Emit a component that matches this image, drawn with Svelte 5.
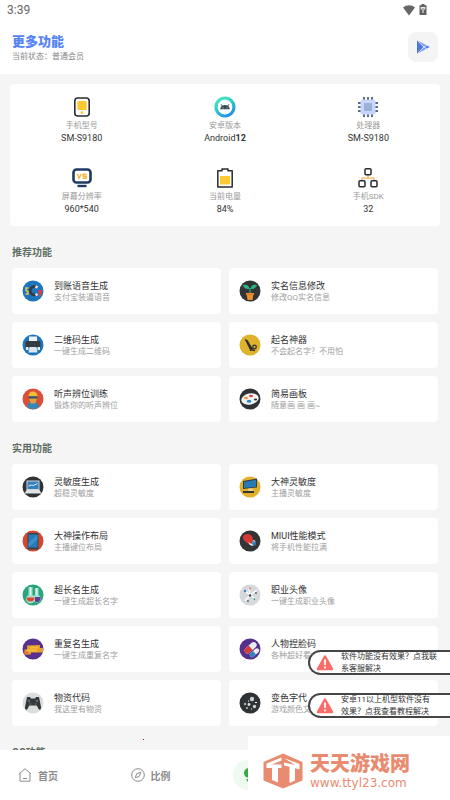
<script>
  const device = [
    { icon: "phone", label: "手机型号", value: "SM-S9180" },
    { icon: "android", label: "安卓版本", value: "Android", strong: "12" },
    { icon: "chip", label: "处理器", value: "SM-S9180" },
    { icon: "screen", label: "屏幕分辨率", value: "960*540" },
    { icon: "battery", label: "当前电量", value: "84%" },
    { icon: "sdk", label: "手机SDK", value: "32" },
  ];

  const sections = [
    {
      title: "推荐功能",
      items: [
        { icon: "magnet", name: "到账语音生成", desc: "支付宝装逼语音" },
        { icon: "plant", name: "实名信息修改", desc: "修改QQ实名信息" },
        { icon: "printer", name: "二维码生成", desc: "一键生成二维码" },
        { icon: "knife", name: "起名神器", desc: "不会起名字？不用怕" },
        { icon: "person", name: "听声辨位训练", desc: "锻炼你的听声辨位" },
        { icon: "palette", name: "简易画板", desc: "随意画 画 画~" },
      ],
    },
    {
      title: "实用功能",
      items: [
        { icon: "laptop", name: "灵敏度生成", desc: "超稳灵敏度" },
        { icon: "desktop", name: "大神灵敏度", desc: "主播灵敏度" },
        { icon: "tablet", name: "大神操作布局", desc: "主播键位布局" },
        { icon: "rocket", name: "MIUI性能模式", desc: "将手机性能拉满" },
        { icon: "flask", name: "超长名生成", desc: "一键生成超长名字" },
        { icon: "network", name: "职业头像", desc: "一键生成职业头像" },
        { icon: "ticket", name: "重复名生成", desc: "一键生成重复名字" },
        { icon: "pill", name: "人物捏脸码", desc: "各种超好看" },
        { icon: "gamepad", name: "物资代码", desc: "我这里有物资" },
        { icon: "space", name: "变色字代", desc: "游戏颜色文" },
      ],
    },
    { title: "QQ功能", items: [] },
  ];

  const notices = [
    "软件功能没有效果？点我联\n系客服解决",
    "安卓11以上机型软件没有\n效果？点我查看教程解决",
  ];

  // Badge background per tool icon
  const badge = {
    magnet: "#1d75bd",
    plant: "#323536",
    printer: "#1d75bd",
    knife: "#dfb22b",
    person: "#d94f38",
    palette: "#303335",
    laptop: "#303335",
    desktop: "#e2b02d",
    tablet: "#d5482f",
    rocket: "#323536",
    flask: "#27a57c",
    network: "#d5d9dc",
    ticket: "#57308e",
    pill: "#57308e",
    gamepad: "#dcdddd",
    space: "#303335",
  };
</script>

{#snippet deviceIcon(name)}
  <svg class="device-icon" viewBox="0 0 22 22" aria-hidden="true">
    {#if name === "phone"}
      <rect x="3.8" y="2" width="14.4" height="18" rx="3" fill="#fff" stroke="#292b30" stroke-width="1.6" />
      <rect x="6.3" y="5" width="9.4" height="9" rx="1" fill="#ffc931" />
      <circle cx="11" cy="16.7" r="1.4" fill="#ffc931" />
    {:else if name === "android"}
      <defs>
        <linearGradient id="ring" x1="0" y1="0" x2="0.6" y2="1">
          <stop offset="0" stop-color="#4cecbd" />
          <stop offset="0.5" stop-color="#2ecbc9" />
          <stop offset="1" stop-color="#2794e2" />
        </linearGradient>
      </defs>
      <circle cx="11" cy="11" r="9" fill="#fff" stroke="url(#ring)" stroke-width="3.2" />
      <path d="M6.2 13.3a4.8 4.3 0 0 1 9.6 0z" fill="#35495a" />
      <path d="M7 8.3l1.500 2M15 8.300l-1.500 2" stroke="#35495a" />
      <circle cx="9" cy="11.800" r=".5" fill="#fff" />
      <circle cx="13" cy="11.800" r=".5" fill="#fff" />
    {:else if name === "chip"}
      <path d="M7 1v20M11 1v20M15 1v20M1 7h20M1 11h20M1 15h20" stroke="#2d3a59" stroke-width="1.5" />
      <rect x="3.5" y="3.5" width="15" height="15" rx="2" fill="#c5d7ff" />
      <rect x="7" y="7" width="8" height="8" fill="#9eb0d5" />
    {:else if name === "screen"}
      <rect x="2.5" y="2.5" width="17" height="13" rx="3" fill="#fff" stroke="#203b63" stroke-width="2.6" />
      <path d="M6.3 7l1.8 4.2L10 7M15.5 7.3h-3.3v1.9h3v2h-3.4" fill="none" stroke="#f6b735" stroke-width="1.5" />
      <path d="M6.5 19h9" stroke="#203b63" stroke-width="2.4" />
    {:else if name === "battery"}
      <path d="M8 3.800V2h6v1.800h4.200V20H3.800V3.800z" fill="#fff" stroke="#292b30" stroke-width="1.5" stroke-linejoin="round" />
      <rect x="6" y="9" width="10" height="8.500" fill="#ffc931" />
    {:else}
      <path d="M5 14v-3h12v3M11 8v3" fill="none" stroke="#f3a638" stroke-width="1.2" />
      <g fill="#fff" stroke="#292b30" stroke-width="1.5">
        <rect x="8" y="1.800" width="6" height="6" rx="1" />
        <rect x="2" y="13.800" width="6" height="6" rx="1" />
        <rect x="14" y="13.800" width="6" height="6" rx="1" />
      </g>
    {/if}
  </svg>
{/snippet}

{#snippet toolIcon(name)}
  <svg class="tool-icon" viewBox="0 0 22 22" aria-hidden="true">
    <circle cx="11" cy="11" r="10.5" fill={badge[name]} />
    {#if name === "magnet"}
      <path d="M15 7.5a4.2 4.2 0 1 0 0 6.5" fill="none" stroke="#353a40" stroke-width="2.8" />
      <path d="M13.500 6.400l2 1.100M13.500 15.200l2-1.200" stroke="#e8eaec" stroke-width="2.6" />
      <path d="M6.500 8H4v2.500l2 1v2.500H3.500" fill="none" stroke="#e5cf48" stroke-width="1.4" />
      <path d="M16 10h4.500l-1 5-2 2z" fill="#d6424c" />
    {:else if name === "plant"}
      <path d="M11 13V8" stroke="#29a577" stroke-width="1.2" />
      <path d="M10.500 9C7 9.500 4.500 8 4 5c4-.6 6 .7 6.500 4zM11.500 9c3.500.2 5.700-1.500 6.500-4-4-.8-6 .6-6.500 4z" fill="#2fb386" />
      <path d="M7 13h8v2h-.8l-.7 5h-5l-.7-5H7z" fill="#ef912b" />
      <path d="M7 14.600h8" stroke="#c96d20" stroke-width=".7" />
    {:else if name === "printer"}
      <rect x="7" y="2.500" width="8" height="5" fill="#edf1f3" />
      <rect x="3.500" y="7" width="15" height="7" rx="1" fill="#363b40" />
      <path d="M7.500 13h7l1 5.500h-9z" fill="#dce5eb" />
      <path d="M4 13h2.500v3H4zM15.500 13H18v3h-2.500z" fill="#e7ebed" />
    {:else if name === "knife"}
      <path d="M5.500 5l3 1 5.500 9-2.500 2z" fill="#303231" />
      <circle cx="15.500" cy="13" r="1.800" fill="none" stroke="#303231" stroke-width="1.3" />
      <path d="M11 15.500l5 1" stroke="#303231" stroke-width="1.4" />
    {:else if name === "person"}
      <path d="M5 19c.3-4 2.500-5 6-5s5.700 1 6 5a10 10 0 0 1-12 0z" fill="#3687b9" />
      <path d="M7.300 7h7.400v4.500L13 15.500h-4l-1.700-4z" fill="#e0a041" />
      <path d="M6.500 8a4.500 4.500 0 0 1 9 0z" fill="#f2bd3a" />
      <rect x="6.500" y="8.300" width="9" height="2.200" rx="1" fill="#33556b" />
    {:else if name === "palette"}
      <ellipse cx="11" cy="11" rx="8.800" ry="5.500" fill="#f2f3f3" transform="rotate(-12 11 11)" />
      <ellipse cx="7" cy="10" rx="2" ry="1.200" fill="#ee9837" />
      <ellipse cx="12" cy="8" rx="2" ry="1.300" fill="#df493b" />
      <ellipse cx="10" cy="13.200" rx="2.300" ry="1.500" fill="#2787c7" />
      <ellipse cx="16.500" cy="11.500" rx="1.700" ry="1" fill="#30353a" />
    {:else if name === "laptop"}
      <rect x="5" y="5" width="12" height="8.500" fill="#3181bd" stroke="#cfd6da" />
      <path d="M6.500 10l3-1 2 .5 4-2" fill="none" stroke="#e3eef5" />
      <path d="M4.500 14h13l2 3.500h-17z" fill="#dfe3e5" />
    {:else if name === "desktop"}
      <path d="M4 5l14-2.500v9L4 13z" fill="#333d43" />
      <path d="M5 6l12-2.300v7L5 12z" fill="#267ab6" />
      <path d="M9.500 12.500h4l1 2.500H9z" fill="#e9d38b" />
      <path d="M4 15h11v2H4z" fill="#343536" />
    {:else if name === "tablet"}
      <rect x="5.500" y="3" width="11" height="16.500" rx="1.300" fill="#344351" />
      <rect x="6.500" y="4.500" width="9" height="13" fill="#277bb9" />
      <path d="M6.500 13l9-8.500v5l-9 8z" fill="#3990ca" />
    {:else if name === "rocket"}
      <path d="M5 5c4-2 8-1 9 4l2 3-5 3-4-3c-3-2-4-5-2-7z" fill="#d73932" />
      <path d="M9 12l2 3 3 1 2.500-5-2-1-2 4z" fill="#edf0f2" />
      <path d="M13.500 10.500l3.500 2-.5 3-3.500-1z" fill="#3483be" />
    {:else if name === "flask"}
      <path d="M6.500 3h4v8a4.500 4.500 0 1 1-4 0zM13 4h3.500v7a4 4 0 1 1-3.500 0z" fill="#a9dfd0" />
      <path d="M4.500 13.500h8a4 4 0 1 1-8 0z" fill="#db492f" />
      <path d="M13 13h5.500a3.800 3.800 0 0 1-5.500 4.500z" fill="#633d92" />
      <path d="M8.500 3v8M14.800 4v7" stroke="#e9f6f2" />
    {:else if name === "network"}
      <path d="M5 6l6 5 7-5M11 11l-5 6M11 11l6 4M10 4l1 7" fill="none" stroke="#fff" stroke-width="1.200" />
      <circle cx="6" cy="7" r="1.200" fill="#3c82bd" />
      <circle cx="11" cy="4.500" r="1" fill="#dd7468" />
      <circle cx="11" cy="11.500" r="1.200" fill="#35424b" />
      <circle cx="17" cy="9" r=".9" fill="#4f626d" />
      <circle cx="9" cy="17" r=".9" fill="#4f626d" />
      <circle cx="15.500" cy="15" r=".9" fill="#4b9e88" />
    {:else if name === "ticket"}
      <path d="M5 7.500l13-.5v3h3v4.500H9v2H2.500v-5H5z" fill="#e89d2c" />
      <path d="M5 12.500h10M8 9.500h8" stroke="#f6bd3a" stroke-width="2" />
      <path d="M2.500 13.500h4v3h-4z" fill="#e47734" />
    {:else if name === "pill"}
      <g transform="rotate(-42 11 9)">
        <rect x="4" y="7" width="14" height="6" rx="3" fill="#e9ecef" />
        <path d="M11 7H7a3 3 0 0 0 0 6h4z" fill="#d63c38" />
        <rect x="5" y="14" width="11" height="4.500" rx="2.200" fill="#e9ecef" />
        <path d="M10.500 14H7.200a2.200 2.200 0 0 0 0 4.500h3.300z" fill="#2c83c6" />
      </g>
    {:else if name === "gamepad"}
      <path d="M5 5h3l.8 1.500h4.400L14 5h3l2 10c.3 3.500-2 3.500-3 1l-1.300-2.500H7.300L6 16c-1 2.500-3.300 2.500-3-1z" fill="#35383b" />
      <path d="M5.500 9h3M7 7.500v3" stroke="#686c70" />
      <circle cx="15" cy="9" r="1.200" fill="#666a6d" />
      <circle cx="8.500" cy="12" r="1.200" fill="#53575a" />
      <circle cx="13.500" cy="12" r="1.200" fill="#53575a" />
    {:else}
      <circle cx="13" cy="7" r="2.200" fill="#c9cdce" />
      <circle cx="6" cy="12" r="1.200" fill="#adb2b4" />
      <circle cx="10" cy="12.500" r="1.400" fill="#dddfe0" />
      <circle cx="15.500" cy="14.500" r="1.700" fill="#cbd0d1" />
      <path d="M7 16h2M9 9h1M16 10.500h2M12 17h1" stroke="#fff" />
    {/if}
  </svg>
{/snippet}

<div class="app">
  <div class="status-bar">
    <span>3:39</span>
    <div class="status-icons">
      <svg width="12" height="12" viewBox="0 0 12 12" aria-hidden="true">
        <path d="M0 3.500a9 9 0 0 1 12 0L6 11.500z" fill="#666" />
      </svg>
      <svg width="8" height="12" viewBox="0 0 8 12" aria-hidden="true">
        <path d="M2.500 0h3v1.200H7.500V11H.5V1.200h2z" fill="#606060" />
        <path d="M4 9V4M2.300 5.500V3.500h3.400v2" fill="none" stroke="#eee" stroke-width="1.100" />
      </svg>
    </div>
  </div>

  <header>
    <div>
      <h1>更多功能</h1>
      <p>当前状态：普通会员</p>
    </div>
    <button class="play" aria-label="播放">
      <svg width="14" height="14" viewBox="0 0 14 14" aria-hidden="true">
        <path d="M1 .5v13L7.500 7z" fill="#4c77e8" />
        <path d="M1.500.500L10 5 8.300 6.500zM1.500 13.500L10 9 8.300 7.500z" fill="#6f94f5" />
        <path d="M10.600 5.300L13.800 7l-3.200 1.700L8.900 7z" fill="#5380f2" />
      </svg>
    </button>
  </header>

  <main>
    <section class="device">
      {#each device as item}
        <div class="device-item">
          {@render deviceIcon(item.icon)}
          <span class="label">{item.label}</span>
          <span class="value">{item.value}{#if item.strong}<b>{item.strong}</b>{/if}</span>
        </div>
      {/each}
    </section>

    {#each sections as section}
      <section class="tools">
        <h2>{section.title}</h2>
        <div class="tool-grid">
          {#each section.items as item}
            <button class="tool">
              {@render toolIcon(item.icon)}
              <span class="tool-text">
                <span class="name">{item.name}</span>
                <span class="desc">{item.desc}</span>
              </span>
            </button>
          {/each}
        </div>
      </section>
    {/each}
  </main>

  <nav>
    <a href="#home">
      <svg width="14" height="14" viewBox="0 0 14 14" aria-hidden="true">
        <path d="M1 5.800L7 .8l6 5M2 5v8.200h10V5M5 10.500h4" fill="none" stroke="#8b8b8b" />
      </svg>
      首页
    </a>
    <a href="#ratio">
      <svg width="14" height="14" viewBox="0 0 14 14" aria-hidden="true">
        <circle cx="7" cy="7" r="6.300" fill="none" stroke="#8b8b8b" />
        <path d="M9.800 4.200L8.300 8.300 4.200 9.800l1.500-4.100z" fill="none" stroke="#8b8b8b" />
      </svg>
      比例
    </a>
    <a href="#more" class="active" aria-label="更多功能">
      <svg width="30" height="30" viewBox="0 0 30 30" aria-hidden="true">
        <circle cx="15" cy="15" r="15" fill="#eef9ef" />
        <circle cx="16" cy="13" r="5" fill="#35ab45" />
        <path d="M13 19h6v3h-4z" fill="#35ab45" />
      </svg>
    </a>
  </nav>

  <span class="pointer"></span>

  <div class="notices">
    {#each notices as notice}
      <button class="notice">
        <svg width="18" height="16" viewBox="0 0 18 16" aria-hidden="true">
          <path d="M9 1.500l7 12.500H2z" fill="#fb6c68" stroke="#fb6c68" stroke-width="2.500" stroke-linejoin="round" />
          <path d="M9 4.500v5.500M9 11.500v2" stroke="#fff" stroke-width="1.800" />
        </svg>
        <span>{notice}</span>
      </button>
    {/each}
  </div>

  <a class="site" href="#site">
    <!-- Hexagon with two upright Ts, each on its own face -->
    <svg width="40" height="36" viewBox="0 0 40 36" aria-hidden="true">
      <path d="M20 .5L39.500 9v18.500L20 35.500.5 27.500V9z" fill="#e98b70" />
      <path d="M3.500 10.500L18.500 4.500v3L9 11.500h9.500V15H15v14.500L9 27V15H3.500z" fill="#fff" />
      <path d="M21 5l15.500 6v5.500L32 15.300V27.500L26.500 30V13.800L21 12.500V9.500l11 2.500z" fill="#fff" />
    </svg>
    <span class="site-text">
      <strong>天天游戏网</strong>
      <span>www.ttyl23.com</span>
    </span>
  </a>
</div>

<style>
  :global(body) {
    margin: 0;
  }

  .app {
    position: relative;
    display: flex;
    flex-direction: column;
    height: 100vh;
    overflow: hidden;
    background: #f5f5f5;
    font-family: Roboto, "Noto Sans CJK SC", sans-serif;
    color: #333;
  }

  button {
    border: 0;
    padding: 0;
    font: inherit;
    color: inherit;
    text-align: left;
    cursor: pointer;
  }

  a {
    color: inherit;
    text-decoration: none;
  }

  svg {
    display: block;
    flex: none;
  }

  h1,
  h2,
  p {
    margin: 0;
  }

  .status-bar {
    display: flex;
    justify-content: space-between;
    align-items: center;
    height: 20px;
    padding: 0 23px 0 7px;
    background: #fff;
    font-size: 12px;
    color: #666;
  }

  .status-icons {
    display: flex;
    gap: 4px;
  }

  header {
    display: flex;
    justify-content: space-between;
    align-items: center;
    padding: 11px 12px;
    background: #fff;
  }

  h1 {
    padding-top: 2px;
    font-size: 13px;
    line-height: 18px;
    font-weight: 900;
    color: #5685f5;
  }

  header p {
    font-size: 8px;
    line-height: 12px;
    color: #888;
  }

  .play {
    display: grid;
    place-items: center;
    width: 30px;
    height: 30px;
    border-radius: 8px;
    background: #f4f4f4;
  }

  main {
    flex: 1;
    min-height: 0;
    overflow: hidden;
    padding-top: 10px;
  }

  .device {
    display: grid;
    grid-template-columns: repeat(3, 1fr);
    margin: 0 10px;
    border-radius: 4px;
    background: #fff;
  }

  .device-item {
    display: flex;
    flex-direction: column;
    align-items: center;
    height: 59px;
    padding: 12px 0 0;
  }

  .device-icon {
    width: 22px;
    height: 22px;
  }

  .label {
    padding-top: 2px;
    font-size: 8px;
    line-height: 12px;
    color: #999;
  }

  .value {
    font-size: 9px;
    line-height: 12px;
    color: #333;
  }

  .tools {
    padding: 0 12px;
  }

  h2 {
    font-size: 10px;
    line-height: 16px;
    font-weight: 700;
    color: #5d6d63;
    padding: 19px 0 7px;
  }

  .tool-grid {
    display: grid;
    grid-template-columns: repeat(2, 1fr);
    gap: 8px;
  }

  .tool {
    display: flex;
    align-items: center;
    gap: 10px;
    height: 46px;
    padding: 0 10px;
    border-radius: 4px;
    background: #fff;
  }

  .tool-icon {
    width: 22px;
    height: 22px;
  }

  .tool-text {
    display: flex;
    flex-direction: column;
    padding-top: 2px;
    white-space: nowrap;
  }

  .name {
    font-size: 9px;
    line-height: 12px;
    color: #333;
  }

  .desc {
    font-size: 8px;
    line-height: 12px;
    color: #a0a0a0;
  }

  nav {
    display: grid;
    grid-template-columns: repeat(4, 1fr);
    height: 50px;
    background: #fff;
  }

  nav a {
    display: flex;
    align-items: center;
    gap: 6px;
    padding-left: 18px;
    font-size: 10px;
    font-weight: 700;
    color: #8b8b8b;
  }

  nav .active {
    padding-left: 8px;
  }

  .pointer {
    position: absolute;
    left: 143px;
    bottom: 60px;
    width: 1px;
    height: 1px;
    background: #a02020;
  }

  .notices {
    position: absolute;
    right: -4px;
    bottom: 82px;
    display: grid;
    gap: 18px;
    width: 146px;
  }

  .notice {
    display: flex;
    align-items: center;
    gap: 7px;
    height: 25px;
    padding: 0 8px 0 6px;
    border: 2px solid #454545;
    border-right: 0;
    border-radius: 13px 0 0 13px;
    background: #fff;
    font-size: 8px;
    line-height: 12px;
    white-space: pre;
  }

  .site {
    position: absolute;
    right: 0;
    bottom: 0;
    display: flex;
    align-items: center;
    gap: 7px;
    width: 202px;
    height: 64px;
    padding: 6px 0 0 15px;
    box-sizing: border-box;
    background: #fff;
    color: #e98b70;
  }

  .site-text {
    display: flex;
    flex-direction: column;
  }

  .site-text span {
    font-family: "DejaVu Sans", sans-serif;
    font-size: 12px;
    line-height: 14px;
  }

  .site-text strong {
    font-size: 20px;
    line-height: 24px;
    font-weight: 900;
  }
</style>
